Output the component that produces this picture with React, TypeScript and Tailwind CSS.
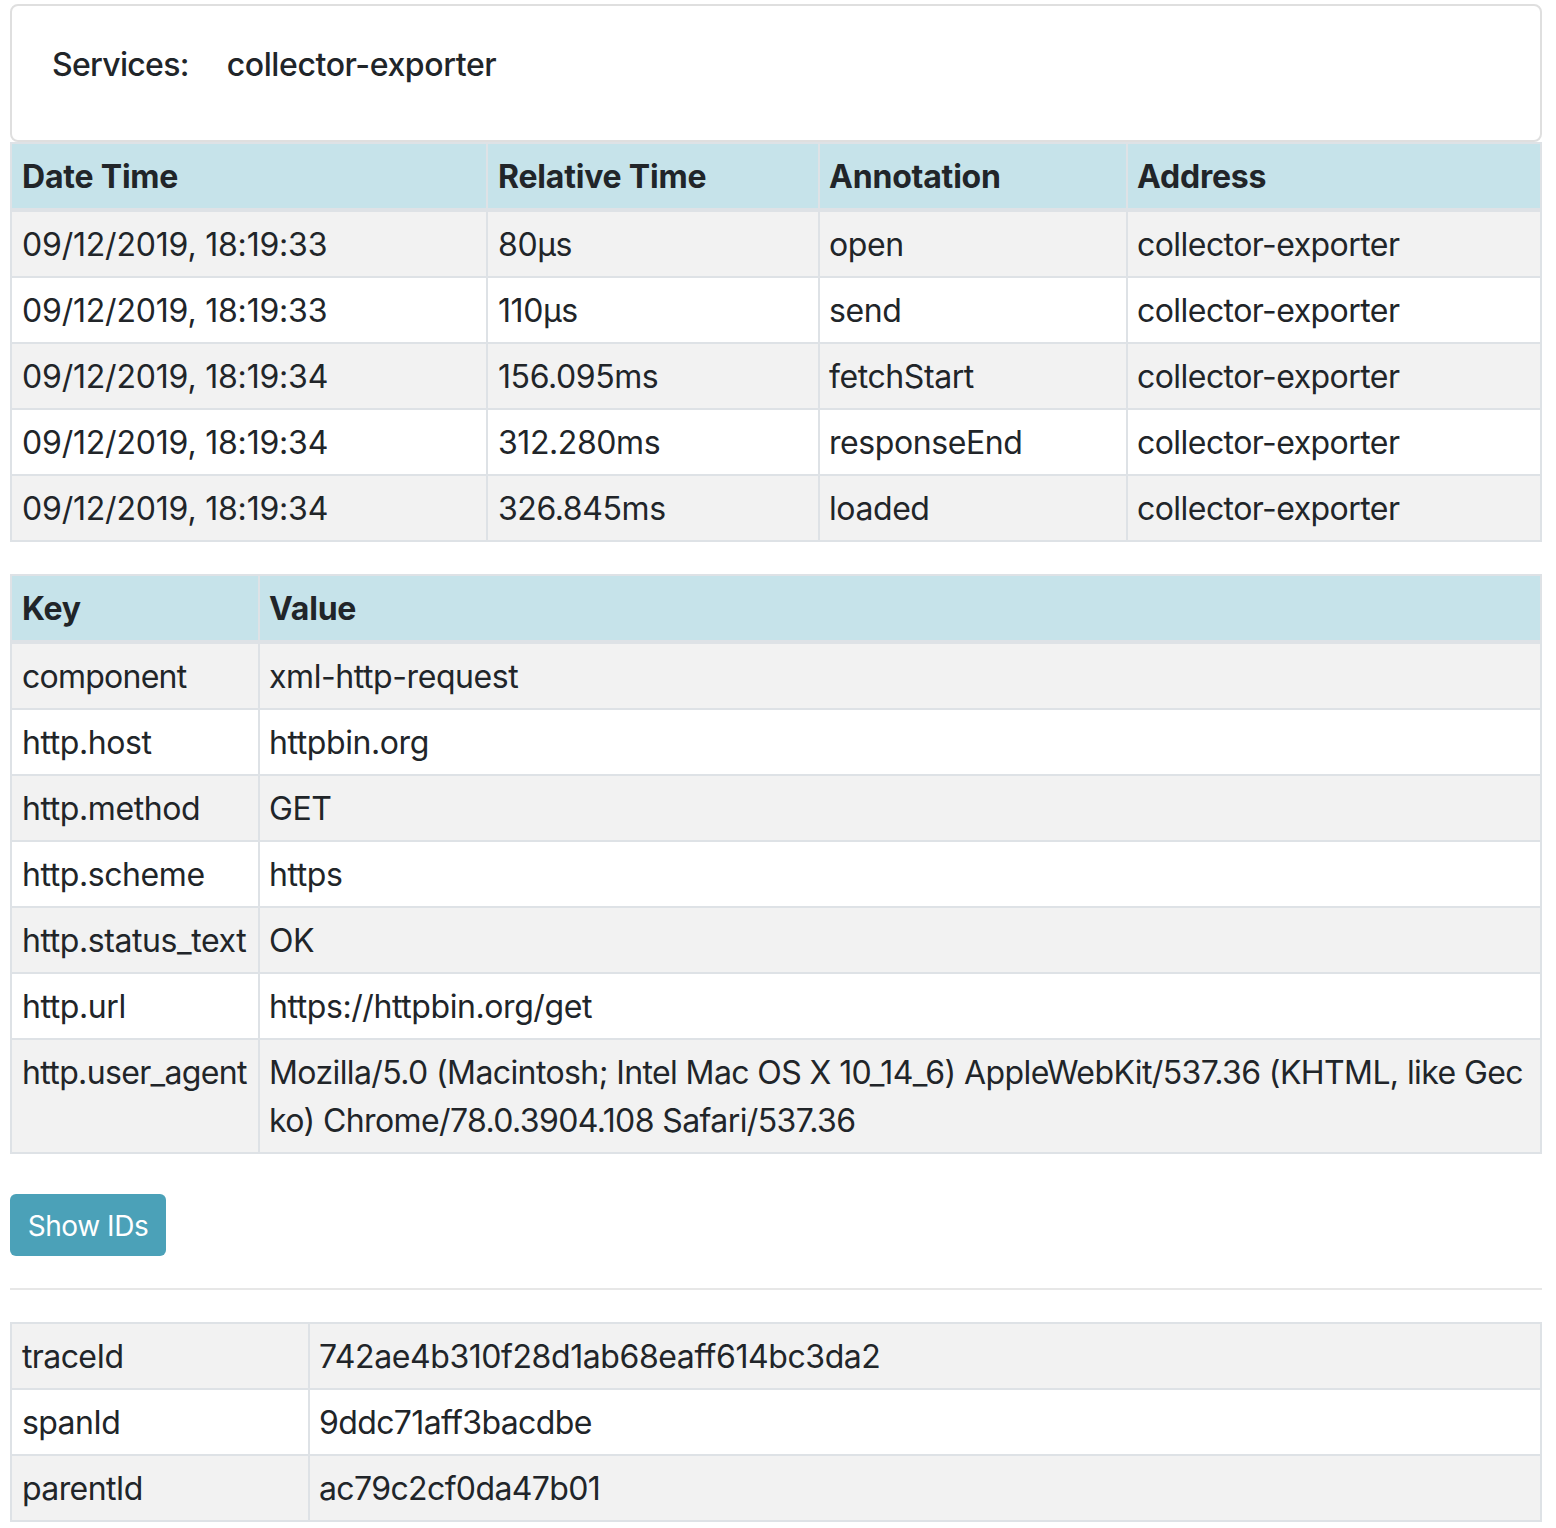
const annotations = [
  { date: "09/12/2019, 18:19:33", rel: "80µs", name: "open" },
  { date: "09/12/2019, 18:19:33", rel: "110µs", name: "send" },
  { date: "09/12/2019, 18:19:34", rel: "156.095ms", name: "fetchStart" },
  { date: "09/12/2019, 18:19:34", rel: "312.280ms", name: "responseEnd" },
  { date: "09/12/2019, 18:19:34", rel: "326.845ms", name: "loaded" },
];

const tags = [
  { k: "component", v: "xml-http-request", keyClass: "tracking-[-0.75px]" },
  { k: "http.host", v: "httpbin.org" },
  { k: "http.method", v: "GET" },
  { k: "http.scheme", v: "https" },
  { k: "http.status_text", v: "OK" },
  { k: "http.url", v: "https://httpbin.org/get" },
  {
    k: "http.user_agent",
    v: "Mozilla/5.0 (Macintosh; Intel Mac OS X 10_14_6) AppleWebKit/537.36 (KHTML, like Gecko) Chrome/78.0.3904.108 Safari/537.36",
    keyClass: "tracking-[-0.65px]",
    valueClass: "tracking-[-0.6px]",
  },
];

const ids = [
  { k: "traceId", v: "742ae4b310f28d1ab68eaff614bc3da2" },
  { k: "spanId", v: "9ddc71aff3bacdbe", valueClass: "tracking-[-0.62px]" },
  { k: "parentId", v: "ac79c2cf0da47b01", valueClass: "tracking-[-0.62px]" },
];

const cell = "border-2 border-[#dee2e6] pr-[10px] pt-[9px] pb-[7px] align-top";
const th = `${cell} border-b-4 pl-[9px] text-left font-bold tracking-[-0.2px]`;
const thWide = `${cell} border-b-4 pl-[10px] text-left font-bold tracking-[-0.2px]`;
const td = `${cell} pl-[9px] break-all`;
const tdWide = `${cell} pl-[10px] break-all`;
const keyTd = `${cell} pl-[10px] whitespace-nowrap`;

function stripe(i: number) {
  return i % 2 === 0 ? "bg-[#f2f2f2]" : "bg-white";
}

export default function App() {
  return (
    <div className="min-h-[1528px] bg-white pt-[4px] pl-[10px] pr-[14px] font-['Inter',sans-serif] text-[32px] leading-[48px] tracking-[-0.42px] text-[#212529]">
      {/* Services card */}
      <div className="flex h-[138px] gap-[38px] rounded-[8px] border-2 border-[#dfdfdf] pl-[40px] pt-[35px] font-medium">
        <span className="tracking-[-0.7px]">Services:</span>
        <span className="tracking-[-0.4px]">collector-exporter</span>
      </div>

      <table className="w-full table-fixed border-collapse">
        <colgroup>
          <col className="w-[476px]" />
          <col className="w-[332px]" />
          <col className="w-[308px]" />
          <col />
        </colgroup>
        <thead>
          <tr className="bg-[#c6e3ea]">
            <th className={thWide}>Date Time</th>
            <th className={thWide}>Relative Time</th>
            <th className={th}>Annotation</th>
            <th className={th}>Address</th>
          </tr>
        </thead>
        <tbody>
          {annotations.map((a, i) => (
            <tr key={a.name} className={stripe(i)}>
              <td className={`${tdWide} tracking-[-0.2px]`}>{a.date}</td>
              <td className={tdWide}>{a.rel}</td>
              <td className={td}>{a.name}</td>
              <td className={`${td} tracking-[-0.55px]`}>collector-exporter</td>
            </tr>
          ))}
        </tbody>
      </table>

      <table className="mt-[32px] w-full table-fixed border-collapse">
        <colgroup>
          <col className="w-[248px]" />
          <col />
        </colgroup>
        <thead>
          <tr className="bg-[#c6e3ea]">
            <th className={thWide}>Key</th>
            <th className={th}>Value</th>
          </tr>
        </thead>
        <tbody>
          {tags.map((t, i) => (
            <tr key={t.k} className={stripe(i)}>
              <td className={`${keyTd} ${t.keyClass ?? ""}`}>{t.k}</td>
              <td className={`${td} ${t.valueClass ?? ""}`}>{t.v}</td>
            </tr>
          ))}
        </tbody>
      </table>

      <button className="mt-[40px] block h-[62px] w-[156px] rounded-[6px] bg-[#4ba1b8] pt-[1px] text-[28px] leading-[42px] text-white">
        Show IDs
      </button>

      <hr className="mt-[32px] border-t-2 border-[#e7e7e7]" />

      <table className="mt-[32px] w-full table-fixed border-collapse">
        <colgroup>
          <col className="w-[298px]" />
          <col />
        </colgroup>
        <tbody>
          {ids.map((row, i) => (
            <tr key={row.k} className={stripe(i)}>
              <td className={`${keyTd} tracking-[-0.6px]`}>{row.k}</td>
              <td className={`${td} ${row.valueClass ?? ""}`}>{row.v}</td>
            </tr>
          ))}
        </tbody>
      </table>
    </div>
  );
}
